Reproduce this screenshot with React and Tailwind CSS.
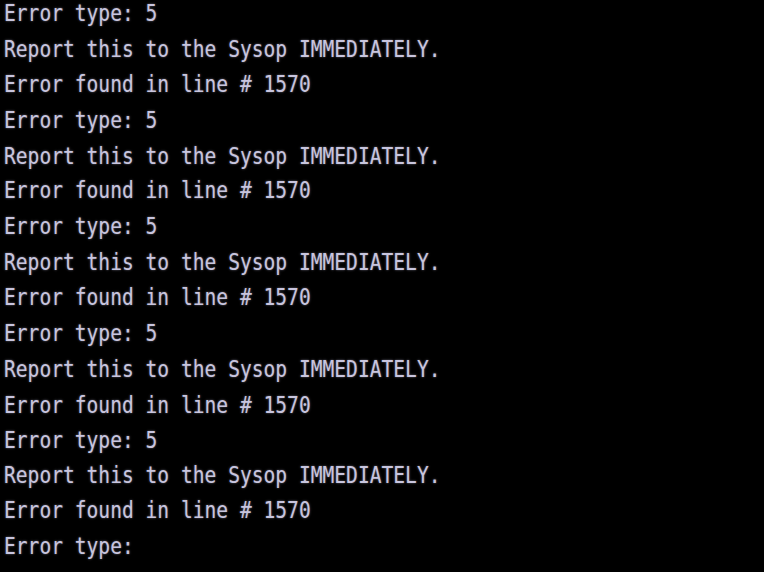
const block = [
  'Error type: 5',
  'Report this to the Sysop IMMEDIATELY.',
  'Error found in line # 1570',
];

const lines = [...block, ...block, ...block, ...block, ...block, 'Error type:'];

export default function App() {
  return (
    <div className="h-[572px] w-[764px] overflow-hidden bg-black">
      <div className="-mt-[4px] origin-top-left scale-y-[1.19] pl-[4px] font-['DejaVu_Sans_Mono',monospace] text-[19.6px] leading-[29.88px] text-[#c8c5de] [text-shadow:0_0_2px_rgba(200,196,230,0.55)]">
        {lines.map((line, i) => (
          <div key={i} className="whitespace-pre">
            {line}
          </div>
        ))}
      </div>
    </div>
  );
}
